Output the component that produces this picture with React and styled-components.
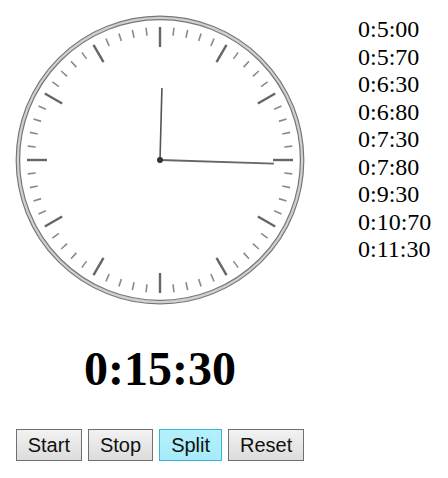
import React from "react";
import styled, { createGlobalStyle } from "styled-components";

const Global = createGlobalStyle`
  html, body { margin: 0; padding: 0; background: #fff; }
  body { font-family: "Liberation Serif", "Times New Roman", serif; color: #000; }
`;

const Page = styled.div`
  display: flex;
  align-items: flex-start;
  width: 448px;
  height: 478px;
`;

const LeftColumn = styled.div`
  width: 320px;
  display: flex;
  flex-direction: column;
  align-items: center;
`;

const ClockFace = styled.svg`
  display: block;
  width: 320px;
  height: 320px;
`;

const BigTime = styled.div`
  margin-top: 21px;
  font-family: "Liberation Serif", "Times New Roman", serif;
  font-weight: bold;
  font-size: 48px;
  line-height: 55px;
  text-align: center;
`;

const ButtonRow = styled.div`
  margin-top: 33px;
  display: flex;
  gap: 6px;
`;

const Button = styled.button`
  height: 32px;
  padding: 0 11px;
  margin: 0;
  font-family: "Liberation Sans", Arial, sans-serif;
  font-size: 20px;
  color: #111;
  border: 1px solid ${(p) => (p.$active ? "#3cb4d4" : "#707070")};
  border-radius: 0;
  background: ${(p) =>
    p.$active
      ? "linear-gradient(#b4f0fc, #a6ebfa)"
      : "linear-gradient(#f2f2f2, #dcdcdc)"};
  cursor: pointer;
`;

const SplitList = styled.ol`
  list-style: none;
  margin: 16px 0 0 38px;
  padding: 0;
  font-family: "Liberation Serif", "Times New Roman", serif;
  font-size: 24px;
  line-height: 27.5px;
`;

const SplitItem = styled.li``;

const splits = [
  "0:5:00",
  "0:5:70",
  "0:6:30",
  "0:6:80",
  "0:7:30",
  "0:7:80",
  "0:9:30",
  "0:10:70",
  "0:11:30",
];

function Clock({ minutes, seconds }) {
  const cx = 160;
  const cy = 160;
  const ticks = [];
  for (let i = 0; i < 60; i++) {
    const major = i % 5 === 0;
    const a = (i * 6 * Math.PI) / 180;
    const r1 = major ? 113 : 125;
    const r2 = 133;
    ticks.push(
      <line
        key={i}
        x1={cx + r1 * Math.sin(a)}
        y1={cy - r1 * Math.cos(a)}
        x2={cx + r2 * Math.sin(a)}
        y2={cy - r2 * Math.cos(a)}
        stroke={major ? "#666" : "#8a8a8a"}
        strokeWidth={major ? 2.4 : 1.6}
      />
    );
  }
  const secA = (seconds * 6 * Math.PI) / 180;
  const minA = ((minutes + seconds / 60) * 6 * Math.PI) / 180;
  return (
    <ClockFace viewBox="0 0 320 320">
      <circle cx={cx} cy={cy} r={142} fill="none" stroke="#d0d0d0" strokeWidth={3} />
      <circle cx={cx} cy={cy} r={143.8} fill="none" stroke="#777" strokeWidth={1.2} />
      <circle cx={cx} cy={cy} r={140.4} fill="none" stroke="#777" strokeWidth={1.2} />
      {ticks}
      <line
        x1={cx}
        y1={cy}
        x2={cx + 72 * Math.sin(minA)}
        y2={cy - 72 * Math.cos(minA)}
        stroke="#555"
        strokeWidth={1.6}
      />
      <line
        x1={cx}
        y1={cy}
        x2={cx + 114 * Math.sin(secA)}
        y2={cy - 114 * Math.cos(secA)}
        stroke="#666"
        strokeWidth={1.8}
      />
      <circle cx={cx} cy={cy} r={3} fill="#333" />
    </ClockFace>
  );
}

export default function App() {
  return (
    <>
      <Global />
      <Page>
        <LeftColumn>
          <Clock minutes={0} seconds={15.3} />
          <BigTime>0:15:30</BigTime>
          <ButtonRow>
            <Button>Start</Button>
            <Button>Stop</Button>
            <Button $active>Split</Button>
            <Button>Reset</Button>
          </ButtonRow>
        </LeftColumn>
        <SplitList>
          {splits.map((s) => (
            <SplitItem key={s}>{s}</SplitItem>
          ))}
        </SplitList>
      </Page>
    </>
  );
}
